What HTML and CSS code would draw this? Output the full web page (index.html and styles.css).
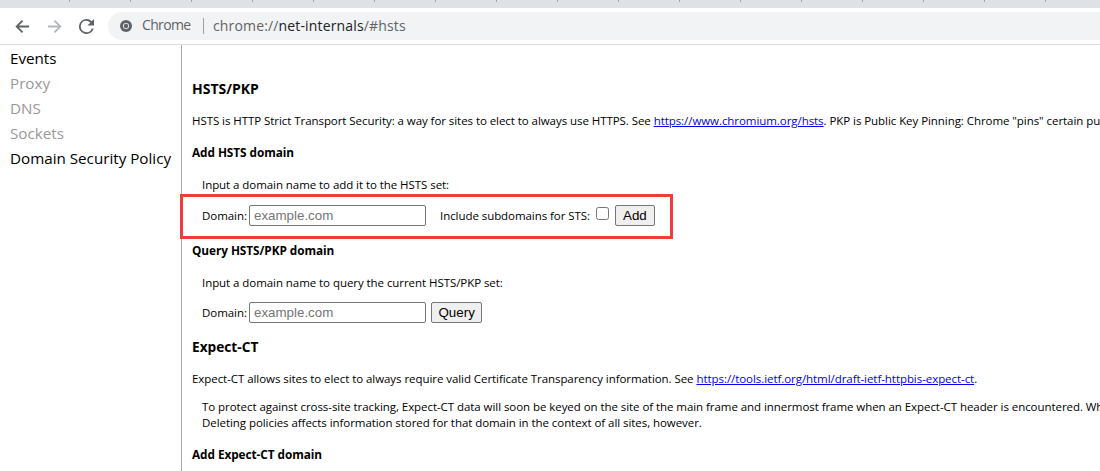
FILE: index.html
```html
<!DOCTYPE html>
<html lang="en">

<head>
  <meta charset="UTF-8">
  <title>chrome://net-internals/#hsts</title>
  <link rel="stylesheet" href="styles.css">
</head>

<body>
  <!-- Tab strip remainder -->
  <div class="tabstrip">
    <span class="tick"></span><span class="tick"></span><span class="tick"></span><span class="tick"></span>
    <span class="tick"></span><span class="tick"></span><span class="tick"></span><span class="tick"></span>
    <span class="tick"></span><span class="tick"></span><span class="tick"></span><span class="tick"></span>
    <span class="tick"></span><span class="tick"></span><span class="tick"></span><span class="tick"></span>
    <span class="tick"></span><span class="tick"></span>
  </div>

  <!-- Browser toolbar -->
  <div class="toolbar">
    <svg class="nav-icon" viewBox="0 0 16 16"><path d="M15 7H4.2l4.6-4.6L7.4 1 .4 8l7 7 1.4-1.4L4.2 9H15z" fill="#5f6368"/></svg>
    <svg class="nav-icon" viewBox="0 0 16 16"><path d="M1 7h10.8L7.2 2.4 8.6 1l7 7-7 7-1.4-1.4L11.8 9H1z" fill="#b4b7bb"/></svg>
    <svg class="nav-icon" viewBox="0 0 16 16"><path d="M13.6 2.4A7.9 7.9 0 0 0 8 0a8 8 0 1 0 7.7 10h-2.1A6 6 0 1 1 8 2c1.7 0 3.1.7 4.2 1.8L9 7h7V0z" fill="#5f6368"/></svg>
    <div class="omnibox">
      <svg class="chrome-icon" viewBox="0 0 12 12">
        <circle cx="6" cy="6" r="6" fill="#5f6368"/>
        <circle cx="6" cy="6" r="3" fill="#f1f3f4"/>
        <circle cx="6" cy="6" r="2.2" fill="#5f6368"/>
      </svg>
      <span class="origin">Chrome</span>
      <span class="divider"></span>
      <span class="url"><span class="scheme">chrome://</span>net-internals<span class="scheme">/#hsts</span></span>
    </div>
  </div>

  <div class="page">
    <!-- Left navigation -->
    <ul class="sidebar">
      <li>Events</li>
      <li class="disabled">Proxy</li>
      <li class="disabled">DNS</li>
      <li class="disabled">Sockets</li>
      <li>Domain Security Policy</li>
    </ul>

    <!-- HSTS tab -->
    <div class="content">
      <h2>HSTS/PKP</h2>
      <p class="intro">HSTS is HTTP Strict Transport Security: a way for sites to elect to always use HTTPS. See <a href="#">https://www.chromium.org/hsts</a>. PKP is Public Key Pinning: Chrome "pins" certain public keys to certain sites.</p>

      <h3>Add HSTS domain</h3>
      <p class="hint">Input a domain name to add it to the HSTS set:</p>
      <form class="domain-form">
        <label class="domain-label" for="addDomain">Domain:</label>
        <input type="text" id="addDomain" placeholder="example.com">
        <label class="sts-label" for="addSts">Include subdomains for STS:</label>
        <input type="checkbox" id="addSts">
        <button type="button">Add</button>
      </form>

      <h3 class="query-title">Query HSTS/PKP domain</h3>
      <p class="hint">Input a domain name to query the current HSTS/PKP set:</p>
      <form class="domain-form query-form">
        <label class="domain-label" for="queryDomain">Domain:</label>
        <input type="text" id="queryDomain" placeholder="example.com">
        <button type="button">Query</button>
      </form>

      <h2 class="ct-title">Expect-CT</h2>
      <p class="intro ct-intro">Expect-CT allows sites to elect to always require valid Certificate Transparency information. See <a href="#">https://tools.ietf.org/html/draft-ietf-httpbis-expect-ct</a>.</p>
      <p class="note">To protect against cross-site tracking, Expect-CT data will soon be keyed on the site of the main frame and innermost frame when an Expect-CT header is encountered. When<br>Deleting policies affects information stored for that domain in the context of all sites, however.</p>

      <h3 class="ct-add">Add Expect-CT domain</h3>
    </div>
  </div>

  <!-- Red annotation box -->
  <div class="highlight"></div>
</body>

</html>
```

FILE: styles.css
```css
/* Reset */
html,
body {
  margin: 0;
  padding: 0;
  height: 100%;
  overflow: hidden;
  background-color: #fff;
  font-family: "Open Sans", "Noto Sans", sans-serif;
  color: #000;
}

/* Tab strip */
.tabstrip {
  display: flex;
  height: 8px;
  padding-left: 69px;
  background-color: #dee1e6;
  overflow: hidden;
}

.tick {
  flex: none;
  width: 1px;
  height: 2px;
  margin-right: 60px;
  background-color: #a0a3a8;
}

/* Toolbar */
.toolbar {
  display: flex;
  align-items: center;
  height: 36px;
  padding-left: 15px;
  border-bottom: 1px solid #dadce0;
}

.nav-icon {
  flex: none;
  width: 15px;
  height: 15px;
  margin-right: 17px;
}

.omnibox {
  flex: 1;
  display: flex;
  align-items: center;
  height: 28px;
  margin-left: -3px;
  padding-left: 12px;
  border-radius: 14px 0 0 14px;
  background-color: #f1f3f4;
  font-size: 14px;
  line-height: 26px;
  white-space: nowrap;
}

.chrome-icon {
  width: 12px;
  height: 12px;
  margin-right: 10px;
}

.origin {
  width: 48px;
  margin-bottom: 2px;
  letter-spacing: -0.65px;
  color: #5f6368;
}

.divider {
  width: 1px;
  height: 16px;
  margin: 0 9px 0 13px;
  background-color: #9aa0a6;
}

.url {
  letter-spacing: 0.15px;
  color: #202124;
}

.scheme {
  color: #5f6368;
}

/* Page layout */
.page {
  display: flex;
  height: 426px;
}

.sidebar {
  flex: none;
  width: 182px;
  box-sizing: border-box;
  margin: 0;
  padding: 1px 0 0 10px;
  border-right: 1px solid #aaa;
  list-style: none;
  font-size: 15.2px;
  line-height: 25px;
}

.sidebar li {
  white-space: nowrap;
}

.disabled {
  color: #999;
}

.content {
  flex: 1;
  min-width: 0;
  padding-left: 10px;
  font-size: 11.5px;
  letter-spacing: -0.06px;
  white-space: nowrap;
  overflow: hidden;
}

h2 {
  margin: 34px 0 0;
  font-size: 14px;
  line-height: 19px;
  letter-spacing: 0;
}

h3 {
  margin: 0;
  font-size: 11.8px;
  line-height: 16px;
}

p {
  margin: 0;
  line-height: 16px;
}

.intro {
  margin-top: 15px;
  margin-bottom: 15px;
}

.hint {
  margin-top: 17px;
  margin-left: 10px;
}

.ct-intro {
  margin-bottom: 12px;
}

.note {
  margin-left: 10px;
}

/* Forms */
.domain-form {
  display: flex;
  align-items: center;
  height: 22px;
  margin: 11px 0 0 10px;
}

.domain-label {
  width: 47px;
}

.domain-form input[type="text"] {
  box-sizing: border-box;
  width: 177px;
  height: 21px;
  margin: 0 5px 0 0;
  padding: 1px 4px;
  border: 1px solid #767676;
  border-radius: 2px;
  font-family: "Liberation Sans", Arial, sans-serif;
  font-size: 13.33px;
  letter-spacing: 0;
}

.domain-form input::placeholder {
  color: #757575;
}

.sts-label {
  width: 156px;
  margin-left: 9px;
}

.domain-form input[type="checkbox"] {
  width: 13px;
  height: 13px;
  margin: 0 6px 3px 0;
}

.domain-form button {
  box-sizing: border-box;
  height: 21px;
  padding: 1px 7px;
  border: 1px solid #767676;
  border-radius: 2px;
  background-color: #efefef;
  font-family: "Liberation Sans", Arial, sans-serif;
  font-size: 13.33px;
  letter-spacing: 0;
  color: #000;
}

.query-title {
  margin-top: 16px;
}

.query-form button {
  padding: 1px 6.5px;
}

.query-form {
  margin-top: 10px;
}

.ct-title {
  margin-top: 14px;
  font-size: 13.7px;
}

.ct-add {
  margin-top: 15px;
}

/* Annotation drawn over the page */
.highlight {
  position: absolute;
  left: 180px;
  top: 194px;
  width: 487px;
  height: 39px;
  border: 3px solid #f23c3c;
}
```
